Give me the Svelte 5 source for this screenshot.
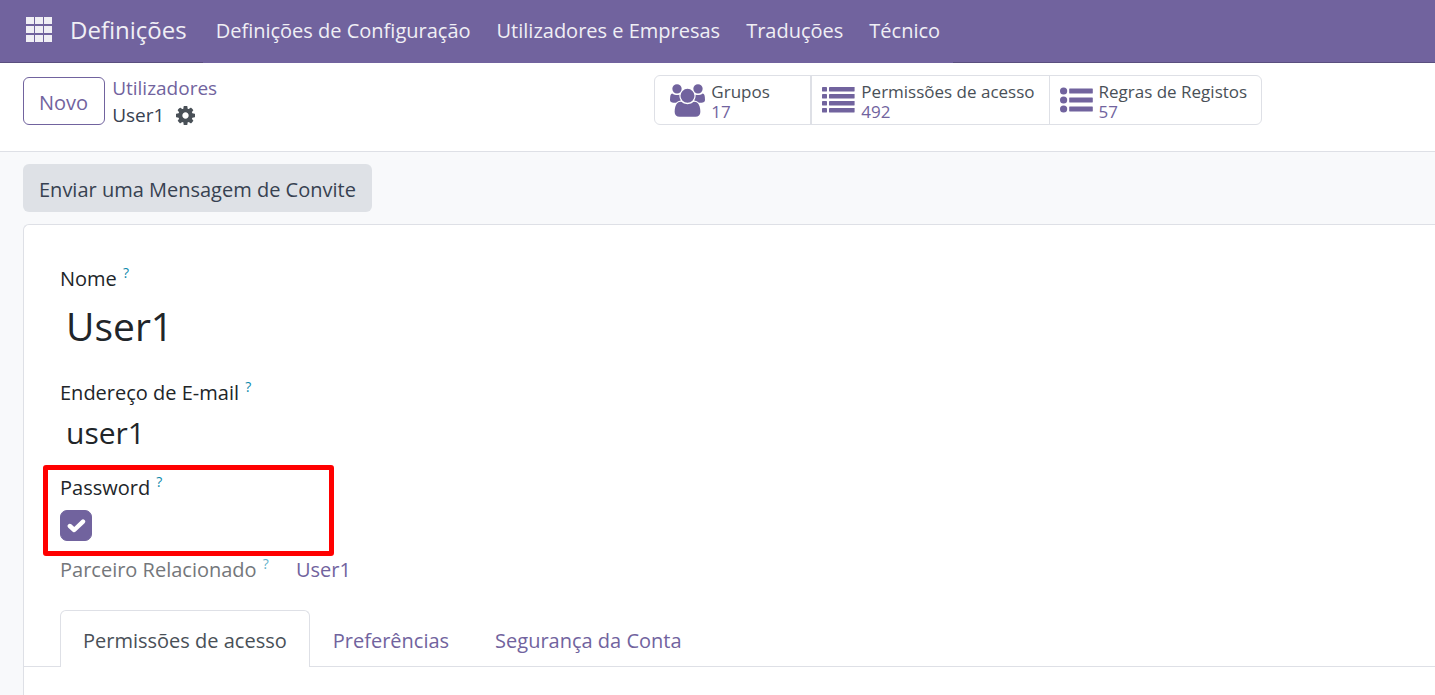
<script>
  const menu = ['Definições de Configuração', 'Utilizadores e Empresas', 'Traduções', 'Técnico'];
  const tabs = ['Permissões de acesso', 'Preferências', 'Segurança da Conta'];

  let activeTab = $state(0);
  let name = $state('User1');
  let email = $state('user1');
  let hasPassword = $state(true);
</script>

<header class="navbar">
  <button class="apps" aria-label="Aplicações">
    <svg width="26" height="25" viewBox="0 0 26 25" fill="currentColor">
      {#each [0, 9, 18] as y}
        {#each [0, 9, 18] as x}
          <rect {x} {y} width="8" height="7" />
        {/each}
      {/each}
    </svg>
  </button>
  <a class="brand" href="#home">Definições</a>
  <nav class="menu">
    {#each menu as item}
      <a href="#menu">{item}</a>
    {/each}
  </nav>
</header>

<section class="control-panel">
  <div class="crumbs">
    <button class="new">Novo</button>
    <div class="trail">
      <a href="#users">Utilizadores</a>
      <div class="current">
        <span>User1</span>
        <button class="gear" aria-label="Ações">
          <svg width="19" height="19" viewBox="0 0 1536 1536" fill="currentColor">
            <path d="M1024 768q0-106-75-181t-181-75-181 75-75 181 75 181 181 75 181-75 75-181zm512-109v222q0 12-8 23t-20 13l-185 28q-19 54-39 91 35 50 107 138 10 12 10 25t-9 23q-27 37-99 108t-94 71q-12 0-26-9l-138-108q-44 23-91 38-16 136-29 186-7 28-36 28h-222q-14 0-24.5-8.5t-11.5-21.5l-28-184q-49-16-90-37l-141 107q-10 9-25 9-14 0-25-11-126-114-165-168-7-10-7-23 0-12 8-23 15-21 51-66.5t54-70.5q-27-50-41-99l-183-27q-13-2-21-12.5t-8-23.5v-222q0-12 8-23t19-13l186-28q14-46 39-92-40-57-107-138-10-12-10-24 0-10 9-23 26-36 98.5-107.5t94.5-71.5q13 0 26 10l138 107q44-23 91-38 16-136 29-186 7-28 36-28h222q14 0 24.5 8.5t11.5 21.5l28 184q49 16 90 37l142-107q9-9 24-9 13 0 25 10 129 119 165 170 7 8 7 22 0 12-8 23-15 21-51 66.5t-54 70.5q26 50 41 98l183 28q13 2 21 12.5t8 23.5z" />
          </svg>
        </button>
      </div>
    </div>
  </div>

  <div class="stats">
    <button class="stat">
      <svg width="35" height="33" viewBox="0 0 1920 1792" fill="currentColor">
        <path d="M593 896q-162 5-265 128h-134q-82 0-138-40.5t-56-118.5q0-353 124-353 6 0 43.5 21t97.5 42.5 119 21.5q67 0 133-23-5 37-5 66 0 139 81 256zM1664 1533q0 120-73 189.5t-194 69.5h-874q-121 0-194-69.5t-73-189.5q0-53 3.5-103.5t14-109 26.5-108.5 43-97.5 62-81 85.5-53.5 111.5-20q10 0 43 21.5t73 48 107 48 135 21.5 135-21.5 107-48 73-48 43-21.5q61 0 111.5 20t85.5 53.5 62 81 43 97.5 26.5 108.5 14 109 3.5 103.5zM640 256q0 106-75 181t-181 75-181-75-75-181 75-181 181-75 181 75 75 181zM1344 640q0 159-112.5 271.5t-271.5 112.5-271.5-112.5-112.5-271.5 112.5-271.5 271.5-112.5 271.5 112.5 112.5 271.5zM1920 865q0 78-56 118.5t-138 40.5h-134q-103-123-265-128 81-117 81-256 0-29-5-66 66 23 133 23 59 0 119-21.5t97.5-42.5 43.5-21q124 0 124 353zM1792 256q0 106-75 181t-181 75-181-75-75-181 75-181 181-75 181 75 75 181z" />
      </svg>
      <span class="stat-text"><span>Grupos</span><span class="value">17</span></span>
    </button>
    <button class="stat">
      <svg width="33" height="33" viewBox="0 0 33 33" fill="currentColor">
        {#each [3, 10, 17, 24] as y}
          <rect x="0" {y} width="5" height="4.4" rx="0.4" />
          <rect x="7" {y} width="25.6" height="4.4" rx="0.4" />
        {/each}
      </svg>
      <span class="stat-text"><span>Permissões de acesso</span><span class="value">492</span></span>
    </button>
    <button class="stat">
      <svg width="33" height="33" viewBox="0 0 33 33" fill="currentColor">
        {#each [7, 16, 25] as cy}
          <circle cx="3.6" {cy} r="3.6" />
          <rect x="9.2" y={cy - 2.4} width="23.6" height="4.8" rx="0.4" />
        {/each}
      </svg>
      <span class="stat-text"><span>Regras de Registos</span><span class="value">57</span></span>
    </button>
  </div>
</section>

<main class="content">
  <div class="statusbar">
    <button class="invite">Enviar uma Mensagem de Convite</button>
  </div>

  <div class="sheet">
    <form class="fields">
      <div class="field name">
        <label for="name">Nome <sup>?</sup></label>
        <input id="name" type="text" bind:value={name} />
      </div>
      <div class="field email">
        <label for="email">Endereço de E-mail <sup>?</sup></label>
        <input id="email" type="text" bind:value={email} />
      </div>
      <div class="field password">
        <label for="password">Password <sup>?</sup></label>
        <div class="check">
          <input id="password" type="checkbox" bind:checked={hasPassword} />
          {#if hasPassword}
            <svg width="20" height="16" viewBox="0 0 20 16" fill="none" stroke="#fff" stroke-width="4.4" stroke-linecap="round" stroke-linejoin="round">
              <path d="M3.8 8L8.2 12L17 3.6" />
            </svg>
          {/if}
        </div>
      </div>
      <div class="partner">
        <span class="muted">Parceiro Relacionado <sup>?</sup></span>
        <a href="#partner">User1</a>
      </div>
    </form>

    <div class="tabs" role="tablist">
      {#each tabs as tab, i}
        <button role="tab" aria-selected={activeTab === i} class:active={activeTab === i} onclick={() => (activeTab = i)}>{tab}</button>
      {/each}
    </div>
    <div class="pane" role="tabpanel"></div>
  </div>
</main>

<style>
  :global(body) {
    background: #f8f9fb;
    overflow: hidden;
  }
  :global(#app) {
    --accent: #71639e;
    --line: #dee0e6;
    font: 20px/30px "Open Sans", "Noto Sans", sans-serif;
    color: #212529;
  }
  button,
  input {
    font: inherit;
    color: inherit;
    margin: 0;
    padding: 0;
    border: 0;
    background: none;
    box-sizing: border-box;
  }
  button {
    cursor: pointer;
  }
  a {
    color: var(--accent);
    text-decoration: none;
  }
  svg {
    display: block;
    flex: none;
  }

  .navbar {
    display: flex;
    align-items: stretch;
    height: 63px;
    padding-left: 26px;
    background: var(--accent);
    box-shadow: inset 0 -1px #5a4f7f;
    color: #f0eff5;
    white-space: nowrap;
  }
  .navbar a {
    color: inherit;
    line-height: 62px;
  }
  .apps {
    padding-bottom: 4px;
  }
  .navbar .brand {
    padding: 0 16px 0 18px;
    font-size: 24px;
    line-height: 60px;
  }
  .menu {
    display: flex;
    background: var(--accent);
  }
  .menu a {
    padding: 0 13px;
  }

  .control-panel {
    display: grid;
    grid-template-columns: 5fr 6fr;
    align-items: start;
    padding: 12px 23px 26px;
    background: #fff;
    border-bottom: 1px solid var(--line);
  }
  .crumbs {
    display: flex;
    gap: 7px;
  }
  .new {
    height: 48px;
    margin-top: 2px;
    padding: 3px 16px 0 15px;
    border: 1px solid var(--accent);
    border-radius: 6px;
    color: var(--accent);
  }
  .trail {
    height: 50px;
    font-size: 19px;
    line-height: 27px;
    color: #374151;
  }
  .trail a {
    display: block;
  }
  .current {
    display: flex;
    align-items: center;
    gap: 12px;
  }
  .gear {
    color: #495057;
  }
  .stats {
    display: flex;
    width: max-content;
    border: 1px solid var(--line);
    border-radius: 6px;
  }
  .stat {
    display: flex;
    align-items: center;
    gap: 6px;
    height: 48px;
    padding: 0 14px 0 10px;
    border-left: 1px solid var(--line);
    font-size: 17px;
    line-height: 20px;
    text-align: left;
    color: var(--accent);
    white-space: nowrap;
  }
  .stat:first-child {
    min-width: 156px;
    padding-left: 15px;
    border-left: 0;
    border-right: 1px solid var(--line);
  }
  .stat-text {
    display: grid;
    padding-top: 4px;
    color: #495057;
  }
  .value {
    color: var(--accent);
  }

  .content {
    padding: 12px 0 0 23px;
  }
  .invite {
    height: 48px;
    padding: 3px 16px 0;
    border-radius: 6px;
    background: #dee1e6;
    color: #374151;
  }
  .statusbar {
    display: flex;
    padding-bottom: 12px;
  }
  .sheet {
    border: 1px solid var(--line);
    border-right: 0;
    border-bottom: 0;
    border-top-left-radius: 6px;
    background: #fff;
  }
  .fields {
    padding: 39px 36px 0;
  }
  .field {
    display: flex;
    flex-direction: column;
    align-items: flex-start;
  }
  sup {
    margin-left: 1px;
    font-size: 14px;
    line-height: 0;
    color: #0c89ab;
    vertical-align: 8px;
  }
  .field input[type="text"] {
    width: 100%;
    padding: 0 6px;
    outline: 0;
  }
  .name input {
    height: 62px;
    font-size: 39px;
  }
  .name {
    padding-bottom: 22px;
  }
  .email input {
    height: 48px;
    font-size: 30px;
  }
  .email {
    padding-bottom: 17px;
  }
  .password {
    position: relative;
    padding-bottom: 14px;
  }
  /* highlight frame drawn over the password field */
  .password::after {
    content: "";
    position: absolute;
    left: -17px;
    top: -8px;
    width: 281px;
    height: 81px;
    border: 5px solid #f00;
    border-radius: 3px;
    pointer-events: none;
  }
  .check {
    display: grid;
    place-items: center;
    margin-top: 7px;
  }
  .check > * {
    grid-area: 1 / 1;
  }
  .check input {
    appearance: none;
    width: 32px;
    height: 31px;
    border: 1px solid var(--accent);
    border-radius: 7px;
  }
  .check input:checked {
    background: var(--accent);
  }
  .check svg {
    pointer-events: none;
  }
  .partner {
    display: grid;
    grid-template-columns: 236px 1fr;
    white-space: nowrap;
  }
  .muted {
    color: #74777b;
  }
  .muted sup {
    color: #5fb2cb;
  }

  .tabs {
    display: flex;
    margin-top: 25px;
    padding: 0 36px;
    box-shadow: inset 0 -1px var(--line);
  }
  .tabs button {
    height: 57px;
    padding: 3px 22px 0;
    border: 1px solid transparent;
    border-bottom: 0;
    border-radius: 6px 6px 0 0;
    color: var(--accent);
  }
  .tabs .active {
    border-color: var(--line);
    background: #fff;
    color: #495057;
  }
  .pane {
    min-height: 60px;
  }
</style>
